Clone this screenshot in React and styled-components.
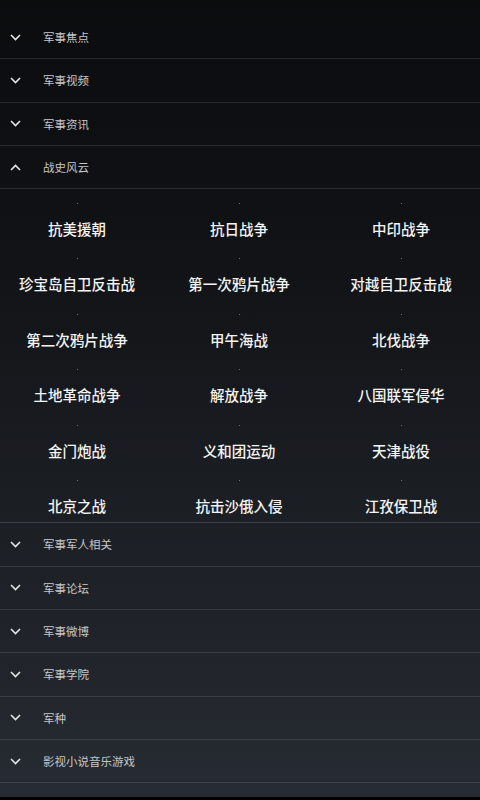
import React, { useState } from "react";
import styled, { createGlobalStyle } from "styled-components";

const Global = createGlobalStyle`
  html, body {
    margin: 0;
    padding: 0;
    background: #000;
  }
  body {
    font-family: "Noto Sans CJK SC", "Noto Sans", sans-serif;
  }
`;

const Screen = styled.div`
  width: 480px;
  height: 800px;
  box-sizing: border-box;
  padding-bottom: 3px;
  background: #000;
  overflow: hidden;
  display: flex;
  flex-direction: column;
`;

const Panel = styled.div`
  flex: 1;
  padding-top: 16px;
  background: linear-gradient(180deg, #0b0c0e 0%, #101215 30%, #1a1d22 60%, #252930 95%, #272b33 100%);
  display: flex;
  flex-direction: column;
`;

const Header = styled.div`
  height: 43.33px;
  box-sizing: border-box;
  display: flex;
  align-items: center;
  border-bottom: 1px solid ${(p) => p.$line};
  cursor: pointer;
`;

const Arrow = styled.div`
  width: 30px;
  display: flex;
  justify-content: center;
  svg {
    display: block;
  }
`;

const Title = styled.span`
  margin-left: 13px;
  font-size: 11.5px;
  color: #c6c8cb;
`;

const Grid = styled.div`
  display: grid;
  grid-template-columns: repeat(3, 154px);
  column-gap: 8px;
  border-bottom: 1px solid #3a3e45;
`;

const Cell = styled.div`
  height: 55.5px;
  display: flex;
  flex-direction: column;
  align-items: center;
`;

const Dot = styled.span`
  margin-top: 13.5px;
  width: 1px;
  height: 1px;
  background: #6a6d72;
`;

const Label = styled.span`
  margin-top: 14px;
  font-size: 14.5px;
  font-weight: 500;
  line-height: 22px;
  color: #f4f4f4;
  white-space: nowrap;
`;

const Chevron = ({ up }) => (
  <svg width="11" height="7" viewBox="0 0 11 7">
    <path
      d={up ? "M1 6 L5.5 1.5 L10 6" : "M1 1 L5.5 5.5 L10 1"}
      fill="none"
      stroke="#e6e6e6"
      strokeWidth="1.6"
    />
  </svg>
);

const before = ["军事焦点", "军事视频", "军事资讯"];
const after = ["军事军人相关", "军事论坛", "军事微博", "军事学院", "军种", "影视小说音乐游戏"];
const topics = [
  "抗美援朝", "抗日战争", "中印战争",
  "珍宝岛自卫反击战", "第一次鸦片战争", "对越自卫反击战",
  "第二次鸦片战争", "甲午海战", "北伐战争",
  "土地革命战争", "解放战争", "八国联军侵华",
  "金门炮战", "义和团运动", "天津战役",
  "北京之战", "抗击沙俄入侵", "江孜保卫战",
];

const lineTop = ["#24262a", "#26282c", "#282a2e", "#2a2c31"];
const lineBottom = ["#34383e", "#363a40", "#383c43", "#3a3e45", "#3c4047", "#3e434a"];

export default function App() {
  const [open, setOpen] = useState(true);
  return (
    <>
      <Global />
      <Screen>
        <Panel>
          {before.map((t, i) => (
            <Header key={t} $line={lineTop[i]}>
              <Arrow><Chevron /></Arrow>
              <Title>{t}</Title>
            </Header>
          ))}
          <Header $line={lineTop[3]} onClick={() => setOpen(!open)}>
            <Arrow><Chevron up={open} /></Arrow>
            <Title>战史风云</Title>
          </Header>
          {open && (
            <Grid>
              {topics.map((t) => (
                <Cell key={t}>
                  <Dot />
                  <Label>{t}</Label>
                </Cell>
              ))}
            </Grid>
          )}
          {after.map((t, i) => (
            <Header key={t} $line={lineBottom[i]}>
              <Arrow><Chevron /></Arrow>
              <Title>{t}</Title>
            </Header>
          ))}
        </Panel>
      </Screen>
    </>
  );
}
